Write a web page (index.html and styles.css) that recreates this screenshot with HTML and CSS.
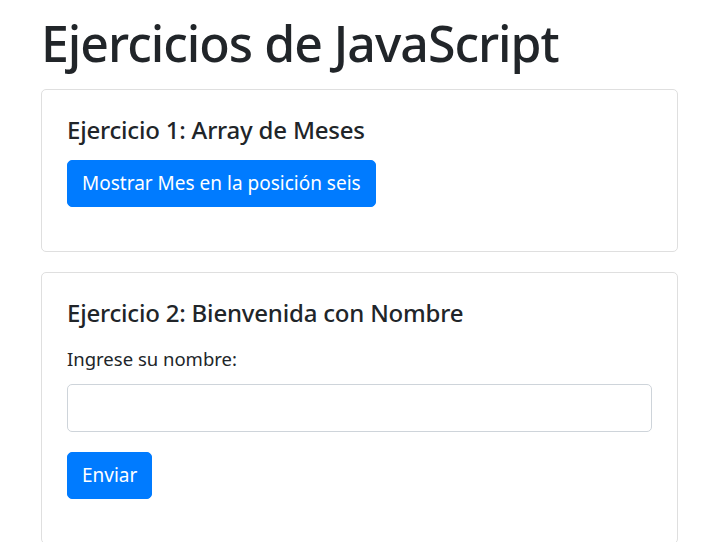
FILE: index.html
```html
<!DOCTYPE html>
<html lang="es">
<head>
<meta charset="utf-8">
<title>Ejercicios de JavaScript</title>
<link rel="stylesheet" href="styles.css">
</head>
<body>
<div class="container">
  <h1 class="title">Ejercicios de JavaScript</h1>
  <div class="card">
    <div class="card-body">
      <h4 class="card-title">Ejercicio 1: Array de Meses</h4>
      <button class="btn">Mostrar Mes en la posición seis</button>
      <div class="result"></div>
    </div>
  </div>
  <div class="card">
    <div class="card-body">
      <h4 class="card-title">Ejercicio 2: Bienvenida con Nombre</h4>
      <label class="label" for="nombre">Ingrese su nombre:</label>
      <input class="input" id="nombre" type="text">
      <button class="btn">Enviar</button>
      <div class="result"></div>
    </div>
  </div>
</div>
</body>
</html>
```
FILE: styles.css
```css
* { box-sizing: border-box; }
html, body { margin: 0; padding: 0; background: #fff; }
body {
  font-family: "Noto Sans", "Open Sans", sans-serif;
  color: #212529;
}
.container {
  padding: 0 35px 0 41px;
}
.title {
  margin: 0;
  padding-top: 9px;
  font-size: 50px;
  font-weight: 500;
  line-height: 68px;
  height: 89px;
  letter-spacing: -1px;
}
.card {
  border: 1px solid #dfdfdf;
  border-radius: 5px;
  margin-bottom: 20px;
}
.card-body {
  padding: 25px;
}
.card-title {
  margin: 0 0 15px 0;
  font-size: 24px;
  font-weight: 500;
  line-height: 30px;
  letter-spacing: -0.2px;
}
.btn {
  display: inline-block;
  font-family: inherit;
  font-size: 19px;
  line-height: 27px;
  padding: 9px 14px;
  border: 1px solid #007bff;
  background: #007bff;
  color: #fff;
  border-radius: 5px;
}
.result { height: 19px; }
.label {
  display: block;
  font-size: 18.5px;
  line-height: 27px;
  padding-top: 2px;
  margin-bottom: 12px;
}
.input {
  display: block;
  width: 100%;
  height: 48px;
  border: 1px solid #ced4da;
  border-radius: 5px;
  margin-bottom: 20px;
  font-family: inherit;
  font-size: 18px;
}
```
